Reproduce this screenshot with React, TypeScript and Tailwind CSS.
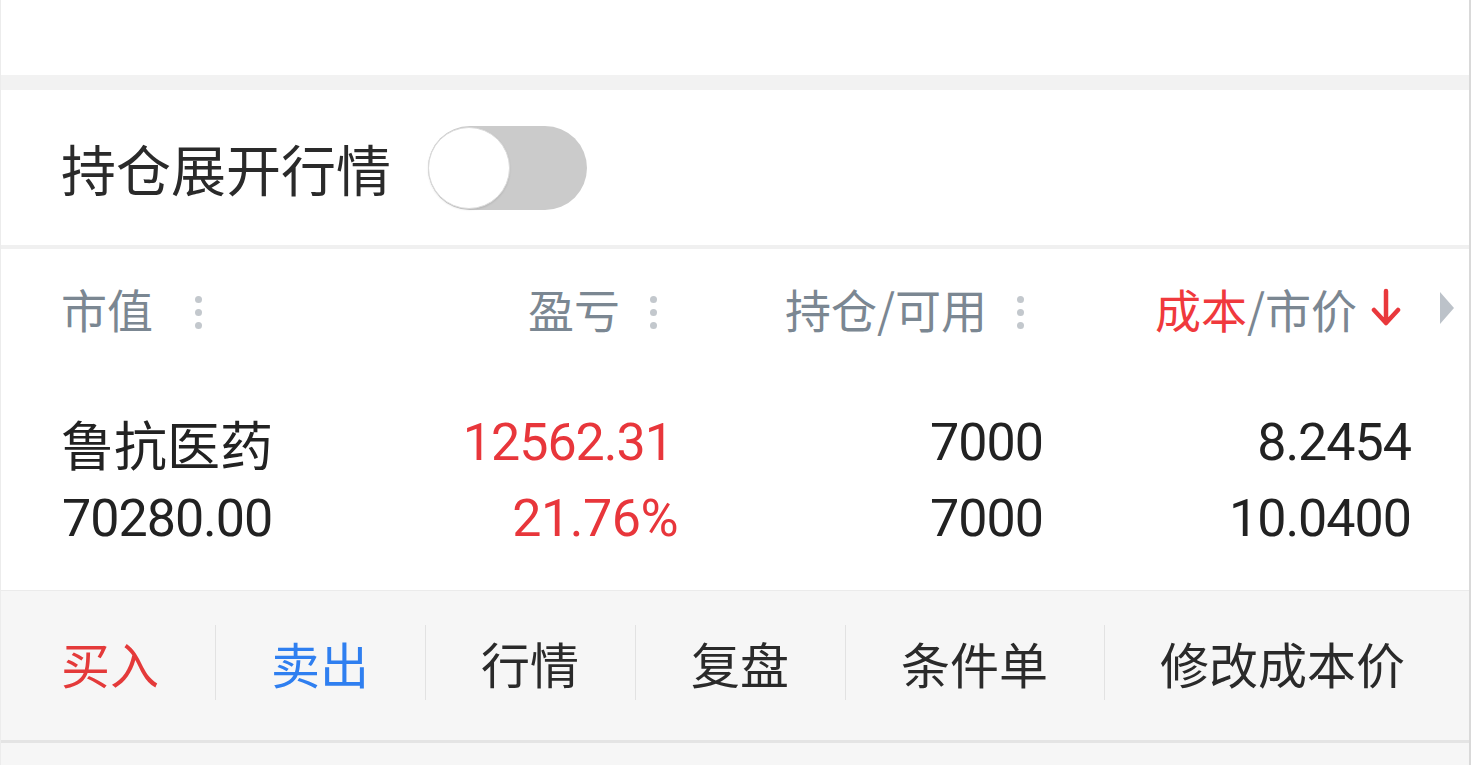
import React from "react";

const cjk = { fontFamily: '"Noto Sans CJK SC", "Noto Sans", sans-serif' };
const num = { fontFamily: 'Roboto, "Noto Sans CJK SC", sans-serif' };

function Dots() {
  return (
    <span className="mt-[8px] inline-flex flex-col items-center justify-center gap-[6px]">
      <span className="block h-[7px] w-[7px] rounded-full bg-[#c3c8cd]" />
      <span className="block h-[7px] w-[7px] rounded-full bg-[#c3c8cd]" />
      <span className="block h-[7px] w-[7px] rounded-full bg-[#c3c8cd]" />
    </span>
  );
}

export default function App() {
  const actions: { label: string; color: string }[] = [
    { label: "买入", color: "text-[#e43a3a]" },
    { label: "卖出", color: "text-[#2f7ff0]" },
    { label: "行情", color: "text-[#2a2a2a]" },
    { label: "复盘", color: "text-[#2a2a2a]" },
    { label: "条件单", color: "text-[#2a2a2a]" },
    { label: "修改成本价", color: "text-[#2a2a2a]" },
  ];
  return (
    <div className="flex h-[765px] w-[1471px] flex-col overflow-hidden border-l border-r-2 border-l-[#ececec] border-r-[#d9d9d9] bg-white" style={cjk}>
      <div className="h-[75px] shrink-0 bg-white" />
      <div className="h-[15px] shrink-0 bg-[#f2f2f2]" />
      <div className="flex h-[155px] shrink-0 items-center pl-[60px]">
        <span className="whitespace-nowrap text-[55px] leading-none text-[#2a2a2a]">持仓展开行情</span>
        <div className="ml-[37px] flex h-[84px] w-[159px] items-center rounded-full bg-[#cbcbcb]">
          <div className="h-[82px] w-[82px] rounded-full border border-[#dadada] bg-white shadow-[0_1px_2px_rgba(0,0,0,0.1)]" />
        </div>
      </div>
      <div className="h-[4px] shrink-0 bg-[#f0f0f0]" />
      <div className="flex h-[341px] shrink-0 flex-col">
        <div className="mt-[31px] flex h-[56px] items-center whitespace-nowrap text-[46px] leading-none text-[#7b8792]">
          <div className="flex w-[230px] items-center pl-[60px]">
            <span>市值</span>
            <span className="ml-[42px] flex"><Dots /></span>
          </div>
          <div className="flex w-[426px] items-center justify-end">
            <span>盈亏</span>
            <span className="ml-[30px] flex"><Dots /></span>
          </div>
          <div className="flex w-[367px] items-center justify-end">
            <span>持仓/可用</span>
            <span className="ml-[30px] flex"><Dots /></span>
          </div>
          <div className="flex flex-1 items-center justify-end pr-[14px]">
            <span><span className="text-[#f0393d]">成本</span>/市价</span>
            <svg className="ml-[14px]" width="30" height="40" viewBox="0 0 30 40">
              <path d="M15 3 V35 M3 22 L15 35 L27 22" fill="none" stroke="#e9383c" strokeWidth="4.5" strokeLinecap="round" strokeLinejoin="round" />
            </svg>
            <svg className="ml-[38px]" width="16" height="34" viewBox="0 0 16 34">
              <path d="M1 1 L15 17 L1 33 Z" fill="#bcc2c9" />
            </svg>
          </div>
        </div>
        <div className="mt-[76px] flex flex-col gap-[14px] whitespace-nowrap text-[#222]">
          <div className="flex h-[62px] items-center">
            <div className="w-[276px] pl-[60px] text-[53px] leading-none">鲁抗医药</div>
            <div className="w-[396px] text-right text-[52px] leading-none tracking-[-1px] text-[#e8363b]" style={num}>12562.31</div>
            <div className="w-[370px] text-right text-[52px] leading-none tracking-[-1px]" style={num}>7000</div>
            <div className="w-[368px] text-right text-[52px] leading-none tracking-[-1px]" style={num}>8.2454</div>
          </div>
          <div className="flex h-[62px] items-center">
            <div className="w-[278px] pl-[61px] text-[52px] leading-none tracking-[-1px]" style={num}>70280.00</div>
            <div className="w-[399px] text-right text-[52px] leading-none tracking-[-0.5px] text-[#e8363b]" style={num}>21.76%</div>
            <div className="w-[365px] text-right text-[52px] leading-none tracking-[-1px]" style={num}>7000</div>
            <div className="w-[368px] text-right text-[52px] leading-none tracking-[-1px]" style={num}>10.0400</div>
          </div>
        </div>
      </div>
      <div className="flex h-[150px] shrink-0 items-center border-t border-[#ebebeb] bg-[#f6f6f6] pb-[6px] pl-[5px]">
        {actions.map((a, i) => (
          <div key={a.label} className={`flex h-[75px] items-center pl-[55px] pr-[56px] ${i > 0 ? "border-l border-[#e2e2e2]" : ""}`}>
            <span className={`whitespace-nowrap text-[49px] leading-none ${a.color}`}>{a.label}</span>
          </div>
        ))}
      </div>
      <div className="h-[3px] shrink-0 bg-[#e4e4e4]" />
      <div className="flex-1 bg-[#f6f6f6]" />
    </div>
  );
}
